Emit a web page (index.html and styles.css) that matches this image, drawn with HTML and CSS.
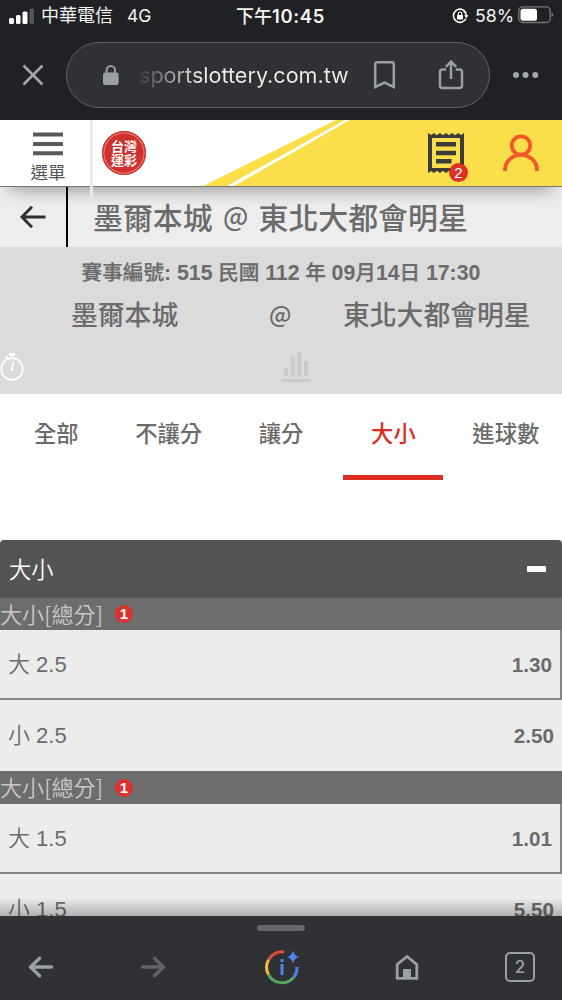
FILE: index.html
```html
<!DOCTYPE html>
<html lang="zh-Hant">
<head>
<meta charset="utf-8">
<title>台灣運彩</title>
<link rel="stylesheet" href="styles.css">
</head>
<body>
<div class="phone">
  <div class="browser-top">
    <div class="status">
      <svg class="signal" width="26" height="16" viewBox="0 0 26 16"><g fill="#fff"><rect x="0" y="10" width="5" height="6" rx="1.5"/><rect x="7" y="7" width="4.5" height="9" rx="1.5"/><rect x="13.500" y="3.500" width="5" height="12.500" rx="1.500"/></g><rect x="20.500" y="0.500" width="4.500" height="15.500" rx="1.500" fill="#56575a"/></svg>
      <span class="carrier">中華電信</span>
      <span class="network">4G</span>
      <span class="clock">下午<span class="clock-num">10:45</span></span>
      <svg class="rotate-lock" width="18" height="16" viewBox="0 0 18 16" fill="none" stroke="#fff"><path d="M14 5A6.600 6.600 0 1 0 14 10.500" stroke-width="1.500"/><path d="M11.500 3.200A6.600 6.600 0 0 1 14.500 8" stroke-width="1.500"/><path d="M12.200 7.200h4.200l-2.100 3z" fill="#fff" stroke="none"/><rect x="5" y="7" width="6" height="4.400" rx=".6" fill="#fff" stroke="none"/><path d="M6.300 7V5.700a1.700 1.700 0 0 1 3.400 0V7" stroke-width="1.100"/></svg>
      <span class="percent">58%</span>
      <svg class="battery" width="36" height="18" viewBox="0 0 36 18"><rect x=".7" y=".9" width="31.500" height="15.600" rx="4" fill="none" stroke="#77787b" stroke-width="1.300"/><rect x="2.500" y="2.700" width="16.500" height="12" rx="2.500" fill="#fff"/><path d="M33.600 6.500q1.700.5 1.700 2.200t-1.700 2.200z" fill="#77787b"/></svg>
    </div>
    <div class="address-row">
      <svg class="close" width="22" height="22" viewBox="0 0 22 22" stroke="#a3a8ad" stroke-width="2.500" fill="none"><path d="M1.500 1.500l19 19M20.500 1.500l-19 19"/></svg>
      <div class="omnibox">
        <svg class="lock" width="18" height="21" viewBox="0 0 18 21"><rect x="1" y="7.500" width="15.600" height="12.500" rx="2.200" fill="#9aa0a6"/><path d="M4.600 9V5.300a4.200 4.200 0 0 1 8.400 0V9" fill="none" stroke="#9aa0a6" stroke-width="2"/></svg>
        <span class="url">sportslottery.com.tw</span>
        <svg class="bookmark" width="24" height="30" viewBox="0 0 24 30" fill="none" stroke="#9aa0a6" stroke-width="2.500"><path d="M2.200 27V4.200a2 2 0 0 1 2-2h14.600a2 2 0 0 1 2 2V27l-9.300-4.300z"/></svg>
        <svg class="share" width="26" height="32" viewBox="0 0 26 32" fill="none" stroke="#9aa0a6" stroke-width="2.500"><path d="M8.200 10.500H4.500a2.500 2.500 0 0 0-2.500 2.500V26.500A2.500 2.500 0 0 0 4.500 29h17a2.500 2.500 0 0 0 2.500-2.500V13a2.500 2.500 0 0 0-2.500-2.500h-3.700M13 20V2.500M7.800 7.800L13 2.600l5.200 5.200"/></svg>
      </div>
      <svg class="more" width="28" height="8" viewBox="0 0 28 8" fill="#a3a8ad"><circle cx="4" cy="4" r="3"/><circle cx="13.500" cy="4" r="3"/><circle cx="23.300" cy="4" r="3"/></svg>
    </div>
  </div>

  <header class="site-header">
    <svg class="banner" width="562" height="66" viewBox="0 0 562 66"><path d="M203 66L336 0H562V66z" fill="#fade4a"/><path d="M227 66L345 0h5L234 66z" fill="#fff"/></svg>
    <div class="menu">
      <svg width="30" height="24" viewBox="0 0 30 24" fill="#595959"><path d="M0 .500h30v4H0zM0 10h30v4H0zM0 19.300h30v4H0z"/></svg>
      <span>選單</span>
    </div>
    <div class="brand-divider"></div>
    <div class="logo">台灣<br>運彩</div>
    <div class="slip">
      <svg width="38" height="42" viewBox="0 0 38 42"><path d="M1 1l3 2 3-2 2.500 2.200L13 1l3 2.200L19 1l3 2.200L25 1l3 2.200L31 1l3 2 3-2v40l-3-2-3 2-3-2.200L25 41l-3-2.200L19 41l-3-2.200L13 41l-3-2.200L7 41l-3-2-3 2z" fill="#3b3b3b"/><path d="M5 6h28v30H5z" fill="#fade4a"/><path d="M9 10h20v4.500H9zM9 18.700h20v4.500H9zM9 27h15.500v4.500H9z" fill="#3b3b3b"/></svg>
      <b class="slip-count">2</b>
    </div>
    <svg class="user" width="36" height="38" viewBox="0 0 36 38" fill="none" stroke="#f2572b" stroke-width="3.800"><circle cx="18" cy="11.500" r="9.200"/><path d="M1.900 37C2 27 9.500 20.800 18 20.800S34 27 34.100 37"/></svg>
  </header>

  <div class="title-bar">
    <div class="back"><svg width="26" height="24" viewBox="0 0 26 24" fill="none" stroke="#303030" stroke-width="2.900"><path d="M25.500 12H2M12 1.800L2 12l10 10.200"/></svg></div>
    <h1><span>墨爾本城</span><span class="title-at">@</span><span>東北大都會明星</span></h1>
  </div>

  <section class="match">
    <p class="match-no">賽事編號<b>: 515</b> 民國 <b>112</b> 年 <b>09</b>月<b>14</b>日 <b>17:30</b></p>
    <div class="teams"><span class="away">墨爾本城</span><span class="at">@</span><span class="home">東北大都會明星</span></div>
    <div class="match-icons">
      <svg class="timer" width="24" height="29" viewBox="0 0 24 29" fill="none" stroke="#fff"><circle cx="12" cy="17" r="10.800" stroke-width="1.700"/><path d="M9 1h6v3H9zM4.800 5.300l3-1.300.8 1.800-3 1.400z" fill="#fff" stroke="none"/><path d="M12 4v3M12 17l1.200-7" stroke-width="1.400"/><circle cx="12" cy="17.500" r="1.500" fill="#fff" stroke="none"/></svg>
      <svg class="chart" width="30" height="32" viewBox="0 0 30 32" fill="#c9c9c9"><path d="M3 17h4v8H3zM10 6h3.500v19H10zM16.500 1h3.800v24h-3.800zM23 10h4v15h-4zM0 28h30v3H0z"/></svg>
    </div>
  </section>

  <nav class="tabs">
    <a>全部</a><a>不讓分</a><a>讓分</a><a class="active">大小</a><a>進球數</a>
  </nav>

  <main class="market">
    <div class="market-head"><span>大小</span><i class="minus"></i></div>
    <div class="group-head first"><span>大小[總分]</span><b>1</b></div>
    <div class="odd boxed"><span>大 2.5</span><b>1.30</b></div>
    <div class="odd"><span>小 2.5</span><b>2.50</b></div>
    <div class="group-head"><span>大小[總分]</span><b>1</b></div>
    <div class="odd boxed"><span>大 1.5</span><b>1.01</b></div>
    <div class="odd last"><span>小 1.5</span><b>5.50</b></div>
  </main>

  <footer class="browser-bottom">
    <div class="handle"></div>
    <div class="tools">
      <svg width="26" height="22" viewBox="0 0 26 22" fill="none" stroke="#9aa0a6" stroke-width="3.300" stroke-linecap="round" stroke-linejoin="round"><path d="M23.500 11H2.500M11.500 2.200L2.500 11l9 8.800"/></svg>
      <svg width="26" height="22" viewBox="0 0 26 22" fill="none" stroke="#606368" stroke-width="3.300" stroke-linecap="round" stroke-linejoin="round"><path d="M2.500 11h21M14.500 2.200l9 8.800-9 8.800"/></svg>
      <svg width="38" height="36" viewBox="0 0 38 36" fill="none" stroke-width="3"><path d="M5.500 11A15.200 15.200 0 0 1 21.300 3" stroke="#d9503f"/><path d="M5.500 11A15.200 15.200 0 0 0 5.500 25.500" stroke="#f5bd3d"/><path d="M5.500 25.500A15.200 15.200 0 0 0 30.500 28.500" stroke="#58a65c"/><path d="M30.500 28.500A15.200 15.200 0 0 0 34 18" stroke="#4e83ee"/><path d="M19 15v11M19 10v3" stroke="#4e83ee"/><path d="M30 1.500q1.200 5.300 6.300 6.500-5.100 1.200-6.300 6.500-1.200-5.300-6.300-6.500 5.100-1.200 6.300-6.500z" fill="#4e83ee"/></svg>
      <svg width="24" height="26" viewBox="0 0 24 26"><path d="M2.200 24.300V10.500L12 2.500l9.800 8v13.800z" fill="none" stroke="#9aa0a6" stroke-width="2.800"/><path d="M8 15h8v9H8z" fill="#9aa0a6"/></svg>
      <div class="tab-count">2</div>
    </div>
  </footer>
</div>
</body>
</html>
```
FILE: styles.css
```css
* { box-sizing: border-box; }
body {
  margin: 0;
  font-family: "Liberation Sans", "Noto Sans CJK TC", sans-serif;
  color: #6b6b6b;
}
svg { display: block; flex: none; }
.phone {
  width: 562px;
  height: 1000px;
  overflow: hidden;
  display: flex;
  flex-direction: column;
  background: #fff;
}
.phone > * { flex: none; }

/* browser chrome */
.browser-top { height: 120px; background: #202124; color: #f4f4f4; }
.status { height: 32px; display: flex; align-items: center; white-space: nowrap; font-family: Inter, "Noto Sans CJK TC", sans-serif; }
.signal { margin: -1px 0 0 9px; }
.carrier { width: 86px; margin-left: 6px; font-size: 18px; line-height: 32px; }
.network { width: 109px; padding-bottom: 2px; font-size: 17.5px; }
.clock { width: 216px; font-size: 18px; font-weight: 500; line-height: 32px; }
.clock-num { font-weight: 600; font-size: 18.4px; letter-spacing: .7px; }
.rotate-lock { width: 18px; }
.percent { width: 43px; margin-left: 5px; padding-bottom: 2px; font-size: 17.7px; }
.battery { margin-top: -2px; }
.address-row { height: 86px; display: flex; align-items: center; }
.close { margin-left: 22px; }
.omnibox {
  width: 424px;
  height: 66px;
  margin-left: 22px;
  border: 1.5px solid #5f6165;
  border-radius: 33px;
  background: #303134;
  display: flex;
  align-items: center;
}
.lock { margin-left: 35px; }
.url {
  width: 234px;
  margin-left: 19px;
  font: 400 21.600px/30px Inter, sans-serif;
  background: linear-gradient(90deg, #3e3f42, #eee 62px);
  -webkit-background-clip: text;
  background-clip: text;
  color: transparent;
}
.share { margin-left: 41px; }
.more { margin-left: 22px; }

/* site header */
.site-header {
  position: relative;
  z-index: 2;
  height: 67px;
  display: flex;
  border-bottom: 1px solid #777;
  background: #fff;
  box-shadow: 0 12px 18px -10px rgba(0, 0, 0, .4);
}
.banner { position: absolute; left: 0; top: 0; }
.menu { width: 90px; padding: 12px 0 0 4px; display: flex; flex-direction: column; align-items: center; position: relative; margin-left: 1px; }
.menu span { font-size: 17.5px; line-height: 24px; margin-top: 5px; color: #555; }
.brand-divider { width: 3px; height: 78px; margin-left: -1px; background: #e9e9e9; position: relative; }
.logo {
  position: relative;
  width: 44px;
  height: 44px;
  margin: 11px 0 0 9px;
  padding-top: 8px;
  border-radius: 50%;
  background: #cf322c;
  box-shadow: inset 0 0 0 1.5px #cf322c, inset 0 0 0 2.3px #e99;
  color: #fff;
  font: 700 13px/14px "Noto Sans CJK TC", sans-serif;
  text-align: center;
}
.slip { position: relative; margin: 12px 0 0 281px; width: 38px; height: 42px; }
.slip-count {
  position: absolute;
  left: 22px;
  top: 31px;
  width: 19px;
  height: 19px;
  border-radius: 50%;
  background: #dc3224;
  color: #fff;
  font-size: 15px;
  font-weight: 400;
  line-height: 20px;
  text-align: center;
}
.user { position: relative; margin: 14px 0 0 38px; }

.title-bar { height: 60px; display: flex; background: #ededed; }
.back { width: 68px; border-right: 2px solid #000; padding: 18px 0 0 20px; }
.title-bar h1 { display: flex; margin: 0 0 0 25px; font: 500 29.900px/58px "Noto Sans CJK TC", sans-serif; white-space: nowrap; color: #6b6b6b; }
.title-at { width: 46px; font-size: 26px; line-height: 56px; text-align: center; }

.match { height: 147px; padding-top: 12px; background: #dbdbdb; }
.match-no { margin: 0; font-size: 20.600px; font-weight: 500; line-height: 28px; text-align: center; white-space: nowrap; -webkit-text-stroke: .25px #6b6b6b; }
.match-no b { font-size: 21.300px; font-weight: 700; -webkit-text-stroke: 0; }
.teams { display: flex; height: 54px; font: 500 26.800px/54px "Noto Sans CJK TC", sans-serif; white-space: nowrap; }
.away { width: 198px; padding-left: 71px; }
.at { width: 145px; padding-left: 71px; font-size: 23px; line-height: 52px; }
.match-icons { display: flex; padding-top: 10px; }
.timer { margin-top: 1px; }
.chart { margin-left: 257px; }

.tabs { height: 146px; display: grid; grid-template-columns: repeat(5, 1fr); justify-items: center; }
.tabs a { width: 100px; height: 86px; font: 500 22.300px/76px "Noto Sans CJK TC", sans-serif; text-align: center; }
.tabs .active { color: #dd2c20; border-bottom: 5px solid #dd2c20; }

.market { height: 376px; overflow: hidden; position: relative; }
.market::after {
  content: "";
  position: absolute;
  inset: auto 0 0;
  height: 18px;
  background: linear-gradient(transparent, rgba(0, 0, 0, .25));
}
.market-head {
  height: 58px;
  padding: 0 16px 0 9px;
  display: flex;
  align-items: center;
  justify-content: space-between;
  border-radius: 4px 4px 0 0;
  background: #545454;
  color: #fff;
  font: 350 22.300px/56px "Noto Sans CJK TC", sans-serif;
}
.market-head span { height: 58px; }
.minus { width: 19px; height: 6px; border-radius: 1px; background: #fff; }
.group-head {
  height: 33px;
  display: flex;
  align-items: center;
  gap: 12px;
  background: #6d6d6d;
  color: #c9c9c9;
  font: 350 22.100px/30px "Noto Sans CJK TC", sans-serif;
}
.group-head span { height: 33px; }
.group-head.first { height: 32px; }
.group-head b {
  width: 18px;
  height: 18px;
  border-radius: 50%;
  background: #dc322d;
  color: #fff;
  font: 700 15px/18px "Liberation Sans", sans-serif;
  text-align: center;
}
.odd {
  height: 71px;
  padding: 0 8px;
  display: flex;
  align-items: center;
  justify-content: space-between;
  background: #ececec;
  font: 350 22px/70px "Liberation Sans", "Noto Sans CJK TC", sans-serif;
}
.odd b { font-weight: 700; font-size: 20.700px; }
.odd.boxed { height: 70px; padding-top: 2px; border-right: 2px solid #858585; border-bottom: 2px solid #858585; }

.browser-bottom { height: 84px; background: #303134; }
.handle { width: 48px; height: 6px; margin: 0 auto; border-radius: 3px; background: #65686d; transform: translateY(9px); }
.tools { display: flex; align-items: center; height: 90px; padding-left: 28px; }
.tools svg:nth-child(2) { margin-left: 86px; }
.tools svg:nth-child(3) { margin-left: 97px; }
.tools svg:nth-child(4) { margin-left: 94px; }
.tab-count {
  width: 30px;
  height: 30px;
  margin-left: 86px;
  border: 2.5px solid #9aa0a6;
  border-radius: 5px;
  color: #9aa0a6;
  font: 500 17px/26px Inter, sans-serif;
  text-align: center;
}
```
